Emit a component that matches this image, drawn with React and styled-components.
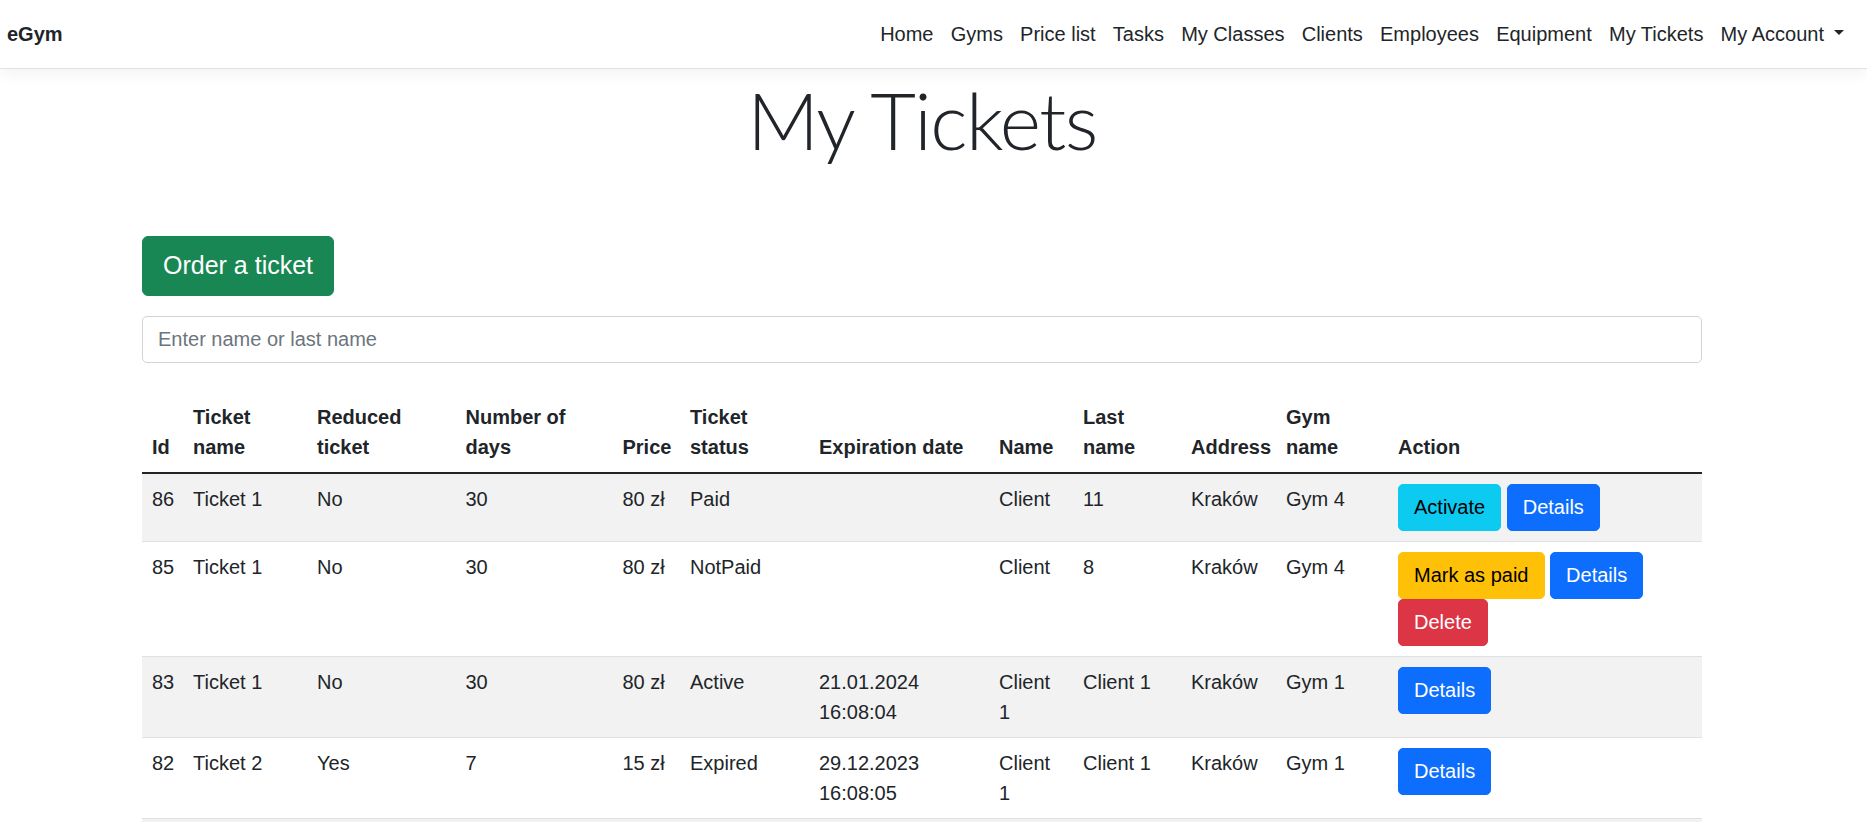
import styled, { createGlobalStyle } from 'styled-components';

const GlobalStyle = createGlobalStyle`
    * {
        box-sizing: border-box;
    }
    body {
        margin: 0;
        background: #fff;
        color: #212529;
        font-family: 'Liberation Sans', Arial, sans-serif;
        font-size: 20px;
        line-height: 1.5;
    }
`;

const Navbar = styled.nav`
    display: flex;
    align-items: center;
    justify-content: space-between;
    height: 69px;
    padding: 0 13px 0 7px;
    background: #fff;
    border-bottom: 1px solid #dee2e6;
    box-shadow: 0 5px 15px rgba(0, 0, 0, 0.05);
`;

const Brand = styled.a`
    color: #212529;
    font-weight: 700;
    text-decoration: none;
`;

const NavList = styled.ul`
    display: flex;
    margin: 0;
    padding: 0;
    list-style: none;
`;

const NavLink = styled.a`
    display: block;
    padding: 10px 8.6px;
    color: #212529;
    text-decoration: none;

    ${(p) =>
        p.$dropdown &&
        `
        padding-right: 10px;

        &::after {
            content: '';
            display: inline-block;
            margin-left: 10px;
            vertical-align: 6px;
            border-top: 5.5px solid;
            border-right: 5px solid transparent;
            border-left: 5px solid transparent;
        }
    `}
`;

const Main = styled.main`
    padding: 0 165px 40px 142px;
`;

const Title = styled.h1`
    margin: 3px 0 0;
    text-align: center;
    font-family: Lato, 'Liberation Sans', sans-serif;
    font-size: 79px;
    font-weight: 300;
    letter-spacing: -1.5px;
    line-height: 96px;
`;

const Toolbar = styled.div`
    margin: 68px 0 20px;
`;

const OrderButton = styled.button`
    padding: 10px 20px;
    border: 1px solid #198754;
    border-radius: 6px;
    background: #198754;
    color: #fff;
    font-family: inherit;
    font-size: 25px;
    line-height: 1.5;
    cursor: pointer;
`;

const Search = styled.input`
    display: block;
    width: 100%;
    padding: 7.5px 15px;
    border: 1px solid #ced4da;
    border-radius: 5px;
    color: #212529;
    font-family: inherit;
    font-size: 20px;
    line-height: 1.5;

    &::placeholder {
        color: #6c757d;
    }
`;

const Table = styled.table`
    width: 100%;
    margin-top: 29px;
    border-collapse: collapse;
    table-layout: fixed;
`;

const Th = styled.th`
    padding: 10px;
    border-bottom: 2px solid #212529;
    font-weight: 700;
    text-align: left;
    vertical-align: bottom;
`;

const Row = styled.tr`
    &:nth-of-type(odd) td {
        background: #f2f2f2;
    }
`;

const Td = styled.td`
    padding: 10px;
    border-bottom: 1px solid #dee2e6;
    vertical-align: top;
`;

const variants = {
    info: { bg: '#0dcaf0', fg: '#000' },
    primary: { bg: '#0d6efd', fg: '#fff' },
    warning: { bg: '#ffc107', fg: '#000' },
    danger: { bg: '#dc3545', fg: '#fff' },
};

const ActionButton = styled.button`
    display: inline-block;
    padding: 7.5px 15px;
    border: 1px solid ${(p) => variants[p.$variant].bg};
    border-radius: 5px;
    background: ${(p) => variants[p.$variant].bg};
    color: ${(p) => variants[p.$variant].fg};
    font-family: inherit;
    font-size: 20px;
    line-height: 1.5;
    cursor: pointer;
`;

const links = ['Home', 'Gyms', 'Price list', 'Tasks', 'My Classes', 'Clients', 'Employees', 'Equipment', 'My Tickets'];

const columns = [
    { title: 'Id', width: 41 },
    { title: 'Ticket name', width: 124 },
    { title: 'Reduced ticket', width: 148.5 },
    { title: 'Number of days', width: 157 },
    { title: 'Price', width: 67.5 },
    { title: 'Ticket status', width: 129 },
    { title: 'Expiration date', width: 180 },
    { title: 'Name', width: 84 },
    { title: 'Last name', width: 108 },
    { title: 'Address', width: 95 },
    { title: 'Gym name', width: 112 },
    { title: 'Action', width: 314 },
];

const tickets = [
    {
        id: 86, ticket: 'Ticket 1', reduced: 'No', days: 30, price: '80 zł', status: 'Paid', expires: '',
        name: 'Client', lastName: '11', address: 'Kraków', gym: 'Gym 4',
        actions: [['Activate', 'info'], ['Details', 'primary']],
    },
    {
        id: 85, ticket: 'Ticket 1', reduced: 'No', days: 30, price: '80 zł', status: 'NotPaid', expires: '',
        name: 'Client', lastName: '8', address: 'Kraków', gym: 'Gym 4',
        actions: [['Mark as paid', 'warning'], ['Details', 'primary'], ['Delete', 'danger']],
    },
    {
        id: 83, ticket: 'Ticket 1', reduced: 'No', days: 30, price: '80 zł', status: 'Active', expires: '21.01.2024 16:08:04',
        name: 'Client 1', lastName: 'Client 1', address: 'Kraków', gym: 'Gym 1',
        actions: [['Details', 'primary']],
    },
    {
        id: 82, ticket: 'Ticket 2', reduced: 'Yes', days: 7, price: '15 zł', status: 'Expired', expires: '29.12.2023 16:08:05',
        name: 'Client 1', lastName: 'Client 1', address: 'Kraków', gym: 'Gym 1',
        actions: [['Details', 'primary']],
    },
    {
        id: 81, ticket: 'Ticket 1', reduced: 'No', days: 30, price: '80 zł', status: 'Expired', expires: '20.12.2023 10:12:41',
        name: 'Client 1', lastName: 'Client 1', address: 'Kraków', gym: 'Gym 1',
        actions: [['Details', 'primary']],
    },
];

const App = () => (
    <>
        <GlobalStyle />
        <Navbar>
            <Brand href="#">eGym</Brand>
            <NavList>
                {links.map((l) => (
                    <li key={l}>
                        <NavLink href="#">{l}</NavLink>
                    </li>
                ))}
                <li>
                    <NavLink href="#" $dropdown>
                        My Account
                    </NavLink>
                </li>
            </NavList>
        </Navbar>
        <Main>
            <Title>My Tickets</Title>
            <Toolbar>
                <OrderButton>Order a ticket</OrderButton>
            </Toolbar>
            <Search placeholder="Enter name or last name" />
            <Table>
                <colgroup>
                    {columns.map((c) => (
                        <col key={c.title} style={{ width: c.width }} />
                    ))}
                </colgroup>
                <thead>
                    <tr>
                        {columns.map((c) => (
                            <Th key={c.title}>{c.title}</Th>
                        ))}
                    </tr>
                </thead>
                <tbody>
                    {tickets.map((t) => (
                        <Row key={t.id}>
                            <Td>{t.id}</Td>
                            <Td>{t.ticket}</Td>
                            <Td>{t.reduced}</Td>
                            <Td>{t.days}</Td>
                            <Td>{t.price}</Td>
                            <Td>{t.status}</Td>
                            <Td>{t.expires}</Td>
                            <Td>{t.name}</Td>
                            <Td>{t.lastName}</Td>
                            <Td>{t.address}</Td>
                            <Td>{t.gym}</Td>
                            <Td>
                                {t.actions.map(([label, variant]) => (
                                    <span key={label}>
                                        <ActionButton $variant={variant}>{label}</ActionButton>{' '}
                                    </span>
                                ))}
                            </Td>
                        </Row>
                    ))}
                </tbody>
            </Table>
        </Main>
    </>
);

export default App;
